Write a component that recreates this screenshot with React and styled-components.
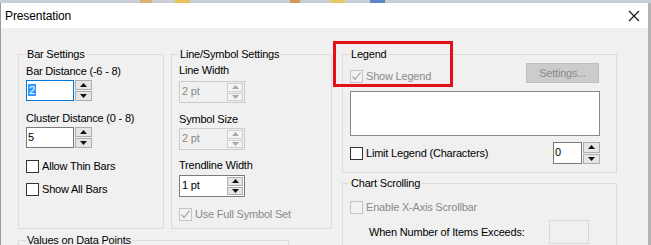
import React from "react";
import styled, { createGlobalStyle } from "styled-components";

const GlobalStyle = createGlobalStyle`
  html, body {
    margin: 0;
    padding: 0;
    background: #f0f0f0;
  }
  body {
    width: 651px;
    height: 245px;
    overflow: hidden;
    font-family: "Liberation Sans", Arial, sans-serif;
    font-size: 11px;
    letter-spacing: -0.2px;
    color: #000;
  }
`;

const Screen = styled.div`
  width: 651px;
  height: 245px;
  display: flex;
  flex-direction: column;
  overflow: hidden;
`;

/* leftovers of the host app's toolbar peeking above the dialog */
const TopStrip = styled.div`
  height: 3px;
  flex: none;
  background: linear-gradient(
    90deg,
    #c9ced6 0 140px,
    #d8b36a 140px 152px,
    #c9ced6 152px 175px,
    #e6c45c 175px 190px,
    #c9ced6 190px 290px,
    #d39a55 290px 300px,
    #c9ced6 300px 330px,
    #e2c96a 330px 345px,
    #c9ced6 345px 370px,
    #5c86c8 370px 385px,
    #c9ced6 385px 100%
  );
`;

const Window = styled.div`
  flex: 1;
  display: flex;
  flex-direction: column;
  border-left: 1px solid #9a9a9a;
  border-right: 3px solid #b4b4b4;
  background: #f0f0f0;
  overflow: hidden;
`;

const TitleBar = styled.div`
  height: 25px;
  flex: none;
  background: #fff;
  display: flex;
  align-items: center;
  justify-content: space-between;
  padding: 0 8px 0 4px;
`;

const Title = styled.span`
  font-size: 12px;
  letter-spacing: -0.1px;
`;

const Body = styled.div`
  flex: 1;
  display: flex;
  gap: 10px;
  padding: 19px 0 0 17px;
  overflow: hidden;
`;

const Column = styled.div`
  display: flex;
  flex-direction: column;
  gap: ${(p) => p.$gap}px;
  position: relative;
  flex: none;
`;

const Row = styled.div`
  display: flex;
  gap: 7px;
`;

const Group = styled.fieldset`
  margin: 0;
  padding: 0 ${(p) => p.$pr ?? 7}px ${(p) => p.$pb ?? 0}px 7px;
  border: 1px solid #dcdcdc;
  min-width: 0;
  box-sizing: border-box;
  width: ${(p) => p.$w}px;
  height: ${(p) => (p.$h ? `${p.$h}px` : "auto")};
  flex: none;
`;

const Caption = styled.legend`
  padding: 0 1px;
  line-height: 14px;
`;

const Stack = styled.div`
  display: flex;
  flex-direction: column;
  align-items: flex-start;
`;

const Label = styled.div`
  line-height: 14px;
  margin-top: ${(p) => p.$mt ?? 0}px;
  margin-left: ${(p) => p.$ml ?? 0}px;
  color: ${(p) => (p.$disabled ? "#8a8a8a" : "#000")};
  white-space: nowrap;
`;

/* ---------- spin (up/down) controls ---------- */

const SpinWrap = styled.div`
  display: flex;
  height: ${(p) => p.$h}px;
  margin-top: ${(p) => p.$mt ?? 0}px;
  flex: none;
`;

const Edit = styled.div`
  width: ${(p) => p.$w}px;
  box-sizing: border-box;
  border: 1px solid ${(p) => (p.$focus ? "#0078d7" : "#7a7a7a")};
  background: #fff;
  padding: 2px 1px;
  line-height: 15px;
`;

const Selected = styled.span`
  background: #3399ff;
  color: #fff;
  padding: 0 1px;
`;

const SpinCol = styled.div`
  width: 17px;
  margin-left: 1px;
  display: flex;
  flex-direction: column;
  gap: 1px;
`;

const SpinBtn = styled.div`
  flex: 1;
  box-sizing: border-box;
  border: 1px solid ${(p) => (p.$disabled ? "#cfcfcf" : "#adadad")};
  background: ${(p) => (p.$disabled ? "#f4f4f4" : "#e5e5e5")};
  display: flex;
  align-items: center;
  justify-content: center;
`;

const Combo = styled.div`
  width: 66px;
  height: 22px;
  margin-top: ${(p) => p.$mt ?? 0}px;
  box-sizing: border-box;
  border: 1px solid ${(p) => (p.$disabled ? "#cccccc" : "#7a7a7a")};
  background: ${(p) => (p.$disabled ? "#f0f0f0" : "#fff")};
  display: flex;
  padding: 1px;
  gap: 2px;
`;

const ComboText = styled.div`
  flex: 1;
  padding-left: 1px;
  line-height: 17px;
  color: ${(p) => (p.$disabled ? "#8a8a8a" : "#000")};
`;

const InnerSpin = styled.div`
  width: 16px;
  display: flex;
  flex-direction: column;
  gap: 1px;
`;

const Arrow = ({ up, disabled }) => (
  <svg width="7" height="4" viewBox="0 0 7 4">
    <polygon
      points={up ? "0,4 7,4 3.5,0" : "0,0 7,0 3.5,4"}
      fill={disabled ? "#a8a8a8" : "#111"}
    />
  </svg>
);

const Spinner = ({ value, width, focus, mt, h = 21 }) => (
  <SpinWrap $h={h} $mt={mt}>
    <Edit $w={width} $focus={focus}>
      {focus ? <Selected>{value}</Selected> : value}
    </Edit>
    <SpinCol>
      <SpinBtn>
        <Arrow up />
      </SpinBtn>
      <SpinBtn>
        <Arrow />
      </SpinBtn>
    </SpinCol>
  </SpinWrap>
);

const PtSpinner = ({ value, disabled, mt }) => (
  <Combo $disabled={disabled} $mt={mt}>
    <ComboText $disabled={disabled}>{value}</ComboText>
    <InnerSpin>
      <SpinBtn $disabled={disabled}>
        <Arrow up disabled={disabled} />
      </SpinBtn>
      <SpinBtn $disabled={disabled}>
        <Arrow disabled={disabled} />
      </SpinBtn>
    </InnerSpin>
  </Combo>
);

/* ---------- checkbox ---------- */

const CheckRow = styled.div`
  display: flex;
  align-items: center;
  gap: 3px;
  line-height: 14px;
  margin-top: ${(p) => p.$mt ?? 0}px;
  color: ${(p) => (p.$disabled ? "#8a8a8a" : "#000")};
  white-space: nowrap;
`;

const Box = styled.span`
  width: 13px;
  height: 13px;
  box-sizing: border-box;
  flex: none;
  border: 1px solid ${(p) => (p.$disabled ? "#c4c4c4" : "#333")};
  background: ${(p) => (p.$disabled ? "#f2f2f2" : "#fff")};
  display: flex;
  align-items: center;
  justify-content: center;
`;

const Check = ({ label, checked, disabled, mt }) => (
  <CheckRow $mt={mt} $disabled={disabled}>
    <Box $disabled={disabled}>
      {checked && (
        <svg width="11" height="11" viewBox="0 0 11 11">
          <polyline
            points="1.5,5.5 4,8.5 9.5,1.5"
            fill="none"
            stroke={disabled ? "#a6a6a6" : "#000"}
            strokeWidth="1.2"
          />
        </svg>
      )}
    </Box>
    {label}
  </CheckRow>
);

/* ---------- legend group parts ---------- */

const SpreadRow = styled.div`
  display: flex;
  justify-content: space-between;
  align-items: ${(p) => p.$align ?? "center"};
  margin-top: ${(p) => p.$mt ?? 0}px;
  align-self: stretch;
`;

const Button = styled.div`
  width: 73px;
  height: 20px;
  box-sizing: border-box;
  border: 1px solid #bfbfbf;
  background: #cccccc;
  color: #8a8a8a;
  display: flex;
  align-items: center;
  justify-content: center;
  margin-right: 1px;
`;

const ListBox = styled.div`
  align-self: stretch;
  height: 45px;
  margin-top: 8px;
  box-sizing: border-box;
  border: 1px solid #828790;
  background: #fff;
`;

const DisabledEdit = styled.div`
  width: 40px;
  height: 24px;
  box-sizing: border-box;
  border: 1px solid #d9d9d9;
  background: #f0f0f0;
  margin-left: auto;
  margin-right: 11px;
`;

const ExceedRow = styled.div`
  display: flex;
  align-items: center;
  align-self: stretch;
  margin-top: 6px;
`;

const Highlight = styled.div`
  position: absolute;
  left: -9px;
  top: -6px;
  width: 120px;
  height: 46px;
  box-sizing: border-box;
  border: 3px solid #e3101b;
  pointer-events: none;
`;

export default function App() {
  return (
    <Screen>
      <GlobalStyle />
      <TopStrip />
      <Window>
        <TitleBar>
          <Title>Presentation</Title>
          <svg width="12" height="12" viewBox="0 0 12 12">
            <path d="M1 1 L11 11 M11 1 L1 11" stroke="#111" strokeWidth="1.1" />
          </svg>
        </TitleBar>
        <Body>
          <Column $gap={4}>
            <Row>
              <Group $w={146} $h={182}>
                <Caption>Bar Settings</Caption>
                <Stack>
                  <Label $mt={3}>Bar Distance (-6 - 8)</Label>
                  <Spinner value="2" width={48} focus mt={2} />
                  <Label $mt={10}>Cluster Distance (0 - 8)</Label>
                  <Spinner value="5" width={48} mt={2} />
                  <Check label="Allow Thin Bars" mt={11} />
                  <Check label="Show All Bars" mt={9} />
                </Stack>
              </Group>
              <Group $w={161} $h={182}>
                <Caption>Line/Symbol Settings</Caption>
                <Stack>
                  <Label $mt={2}>Line Width</Label>
                  <PtSpinner value="2 pt" disabled mt={4} />
                  <Label $mt={9}>Symbol Size</Label>
                  <PtSpinner value="2 pt" disabled mt={2} />
                  <Label $mt={8}>Trendline Width</Label>
                  <PtSpinner value="1 pt" mt={3} />
                  <Check label="Use Full Symbol Set" checked disabled mt={10} />
                </Stack>
              </Group>
            </Row>
            <Group $w={271} $h={60}>
              <Caption>Values on Data Points</Caption>
            </Group>
          </Column>
          <Column $gap={3}>
            <Group $w={275} $pr={16} $pb={8}>
              <Caption>Legend</Caption>
              <Stack>
                <SpreadRow $mt={2} $align="flex-start">
                  <Check label="Show Legend" checked disabled mt={6} />
                  <Button>Settings...</Button>
                </SpreadRow>
                <ListBox />
                <SpreadRow $mt={6}>
                  <Check label="Limit Legend (Characters)" />
                  <Spinner value="0" width={29} h={22} />
                </SpreadRow>
              </Stack>
            </Group>
            <Group $w={275} $h={100} $pr={16}>
              <Caption>Chart Scrolling</Caption>
              <Stack>
                <Check label="Enable X-Axis Scrollbar" disabled mt={10} />
                <ExceedRow>
                  <Label $ml={19}>When Number of Items Exceeds:</Label>
                  <DisabledEdit />
                </ExceedRow>
              </Stack>
            </Group>
            <Highlight />
          </Column>
        </Body>
      </Window>
    </Screen>
  );
}
